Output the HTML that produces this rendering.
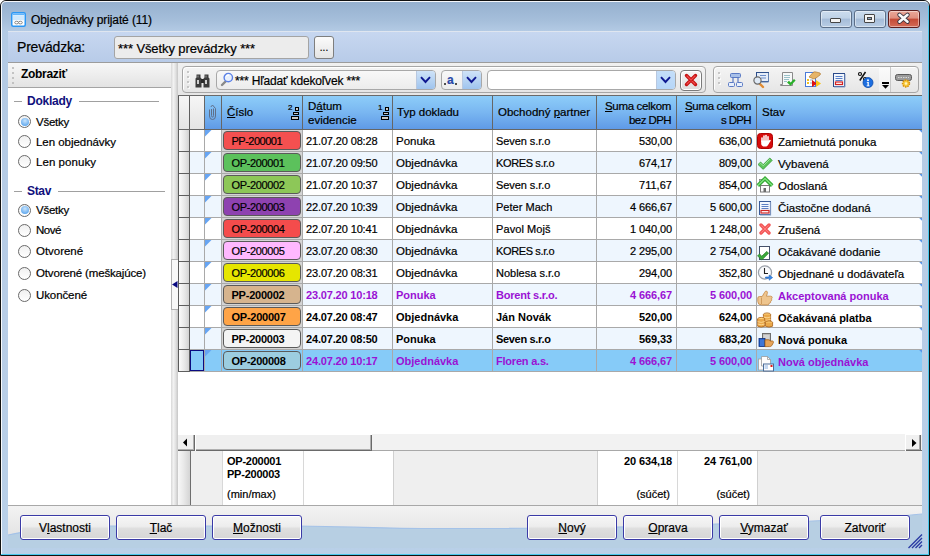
<!DOCTYPE html>
<html><head><meta charset="utf-8">
<style>
*{margin:0;padding:0;box-sizing:border-box}
html,body{width:930px;height:556px;overflow:hidden;background:#fff;font-family:"Liberation Sans",sans-serif;font-size:12px;color:#000}
.a{position:absolute}
.t{position:absolute;white-space:nowrap;-webkit-text-stroke:0.2px currentColor}
.u{text-decoration:underline}
svg{position:absolute;overflow:visible}
</style></head><body>

<div class="a" style="left:0;top:0;width:930px;height:556px;border:1px solid #111;border-radius:6px 6px 0 0;background:linear-gradient(#95b0cf 0px,#a6bfdb 20px,#b3cae4 30px,#b8cde6 300px,#b9d0e8 556px)"></div>
<div class="a" style="left:1px;top:1px;width:928px;height:554px;border:1px solid rgba(255,255,255,.9);border-bottom:none;border-right:none;border-radius:5px 5px 0 0"></div>
<div class="a" style="left:928px;top:6px;width:1px;height:549px;background:#48c8ec"></div>
<div class="a" style="left:1px;top:554px;width:928px;height:1px;background:#48c8ec"></div>
<svg style="left:11px;top:12px" width="15" height="15" viewBox="0 0 15 15"><rect x="0.75" y="0.75" width="13.5" height="13.5" rx="1.5" fill="#fff" stroke="#2b97f5" stroke-width="1.5"/><rect x="1.5" y="1.5" width="12" height="1.6" fill="#62b4fb"/><rect x="2" y="3.3" width="11" height="5" fill="#cfe8fd"/><ellipse cx="5.6" cy="10.6" rx="1.9" ry="1.3" fill="none" stroke="#8a8a8a" stroke-width="1"/><ellipse cx="9.4" cy="10.6" rx="1.9" ry="1.3" fill="none" stroke="#8a8a8a" stroke-width="1"/></svg>
<div class="t" style="left:31.00px;top:9.84px;line-height:20px;font-size:12px;color:#000;letter-spacing:-0.094px;">Objednávky prijaté (11)</div>
<div class="a" style="left:820px;top:10px;width:32px;height:18px;border:1px solid #5b6e88;border-radius:3px;background:linear-gradient(#cbdcee 0,#bfd2e7 45%,#a5bcd8 50%,#b9cde4 100%);box-shadow:inset 0 0 0 1px rgba(255,255,255,.45)"></div>
<div class="a" style="left:854px;top:10px;width:32px;height:18px;border:1px solid #5b6e88;border-radius:3px;background:linear-gradient(#cbdcee 0,#bfd2e7 45%,#a5bcd8 50%,#b9cde4 100%);box-shadow:inset 0 0 0 1px rgba(255,255,255,.45)"></div>
<div class="a" style="left:888px;top:10px;width:32px;height:18px;border:1px solid #5e1e1e;border-radius:3px;background:linear-gradient(#eba899 0,#e08e7e 45%,#c44a36 50%,#d46b57 100%);box-shadow:inset 0 0 0 1px rgba(255,255,255,.45)"></div>
<div class="a" style="left:830px;top:18px;width:11px;height:5px;background:#f4f4f4;border:1px solid #454545;border-radius:1px"></div>
<div class="a" style="left:864px;top:14px;width:11px;height:9px;background:#f4f4f4;border:1px solid #454545;border-radius:1px"></div>
<div class="a" style="left:867px;top:17px;width:5px;height:3px;background:#8ea6c4;border:1px solid #454545"></div>
<svg style="left:897px;top:13px" width="14" height="11" viewBox="0 0 14 11"><path d="M2.5 1.8 L10.5 8.7 M10.5 1.8 L2.5 8.7" stroke="#3a3440" stroke-width="4.4" stroke-linecap="round"/><path d="M2.5 1.8 L10.5 8.7 M10.5 1.8 L2.5 8.7" stroke="#fafafa" stroke-width="2.6" stroke-linecap="round"/></svg>
<div class="a" style="left:8px;top:31px;width:914px;height:1px;background:#dfe6f0"></div>
<div class="a" style="left:8px;top:32px;width:914px;height:30px;background:linear-gradient(#c7d7f0,#b8cbe8)"></div>
<div class="a" style="left:8px;top:62px;width:914px;height:1px;background:#9c9c9c"></div>
<div class="t" style="left:17.00px;top:37.15px;line-height:20px;font-size:14px;color:#000;letter-spacing:-0.203px;">Prevádzka:</div>
<div class="a" style="left:114px;top:36px;width:195px;height:23px;border:1px solid #a4a4a4;border-radius:3px;background:#ececec"></div>
<div class="t" style="left:118.00px;top:38.50px;line-height:20px;font-size:13px;color:#000;letter-spacing:-0.102px;">*** Všetky prevádzky ***</div>
<div class="a" style="left:314px;top:36px;width:20px;height:23px;border:1px solid #7e7e7e;border-radius:3px;background:linear-gradient(#fbfbfb,#e4e4e4)"></div>
<div class="t" style="left:319.83px;top:37.53px;line-height:20px;font-size:10px;color:#000;letter-spacing:0.000px;">...</div>
<div class="a" style="left:8px;top:63px;width:163px;height:24px;background:linear-gradient(#f7f7f7,#e3e3e3)"></div>
<div class="a" style="left:8px;top:87px;width:163px;height:1px;background:#a4a4a4"></div>
<div class="a" style="left:12px;top:67px;width:2px;height:2px;background:#b4b4b4;border-radius:1px"></div>
<div class="a" style="left:12px;top:72px;width:2px;height:2px;background:#b4b4b4;border-radius:1px"></div>
<div class="a" style="left:12px;top:77px;width:2px;height:2px;background:#b4b4b4;border-radius:1px"></div>
<div class="a" style="left:12px;top:82px;width:2px;height:2px;background:#b4b4b4;border-radius:1px"></div>
<div class="t" style="left:21.00px;top:64.34px;line-height:20px;font-size:12px;font-weight:bold;-webkit-text-stroke:0;color:#000;letter-spacing:-0.302px;">Zobraziť</div>
<div class="a" style="left:8px;top:88px;width:163px;height:417px;background:#fff"></div>
<div class="a" style="left:14px;top:101px;width:8px;height:1px;background:#a0a0a0"></div>
<div class="t" style="left:27.00px;top:90.84px;line-height:20px;font-size:12px;font-weight:bold;-webkit-text-stroke:0;color:#10107c;letter-spacing:-0.240px;">Doklady</div>
<div class="a" style="left:79px;top:101px;width:80px;height:1px;background:#a0a0a0"></div>
<div class="a" style="left:18.0px;top:115.0px;width:13px;height:13px;border-radius:50%;border:1px solid #6a6a6a;background:linear-gradient(#f0f0f0,#ffffff)"></div>
<div class="a" style="left:20.5px;top:117.5px;width:8px;height:8px;border-radius:50%;background:radial-gradient(circle at 50% 35%,#c9e4fc,#5da7ee 80%)"></div>
<div class="t" style="left:36.00px;top:111.52px;line-height:20px;font-size:11.5px;color:#000;letter-spacing:-0.252px;">Všetky</div>
<div class="a" style="left:18.0px;top:135.0px;width:13px;height:13px;border-radius:50%;border:1px solid #6a6a6a;background:linear-gradient(#f0f0f0,#ffffff)"></div>
<div class="t" style="left:36.00px;top:131.52px;line-height:20px;font-size:11.5px;color:#000;letter-spacing:-0.040px;">Len objednávky</div>
<div class="a" style="left:18.0px;top:155.0px;width:13px;height:13px;border-radius:50%;border:1px solid #6a6a6a;background:linear-gradient(#f0f0f0,#ffffff)"></div>
<div class="t" style="left:36.00px;top:151.52px;line-height:20px;font-size:11.5px;color:#000;letter-spacing:0.054px;">Len ponuky</div>
<div class="a" style="left:14px;top:191px;width:8px;height:1px;background:#a0a0a0"></div>
<div class="t" style="left:27.00px;top:180.84px;line-height:20px;font-size:12px;font-weight:bold;-webkit-text-stroke:0;color:#10107c;letter-spacing:-0.337px;">Stav</div>
<div class="a" style="left:58px;top:191px;width:107px;height:1px;background:#a0a0a0"></div>
<div class="a" style="left:18.0px;top:203.5px;width:13px;height:13px;border-radius:50%;border:1px solid #6a6a6a;background:linear-gradient(#f0f0f0,#ffffff)"></div>
<div class="a" style="left:20.5px;top:206px;width:8px;height:8px;border-radius:50%;background:radial-gradient(circle at 50% 35%,#c9e4fc,#5da7ee 80%)"></div>
<div class="t" style="left:36.00px;top:200.02px;line-height:20px;font-size:11.5px;color:#000;letter-spacing:-0.252px;">Všetky</div>
<div class="a" style="left:18.0px;top:223.5px;width:13px;height:13px;border-radius:50%;border:1px solid #6a6a6a;background:linear-gradient(#f0f0f0,#ffffff)"></div>
<div class="t" style="left:36.00px;top:220.02px;line-height:20px;font-size:11.5px;color:#000;letter-spacing:-0.461px;">Nové</div>
<div class="a" style="left:18.0px;top:244.5px;width:13px;height:13px;border-radius:50%;border:1px solid #6a6a6a;background:linear-gradient(#f0f0f0,#ffffff)"></div>
<div class="t" style="left:36.00px;top:241.02px;line-height:20px;font-size:11.5px;color:#000;letter-spacing:-0.038px;">Otvorené</div>
<div class="a" style="left:18.0px;top:266.5px;width:13px;height:13px;border-radius:50%;border:1px solid #6a6a6a;background:linear-gradient(#f0f0f0,#ffffff)"></div>
<div class="t" style="left:36.00px;top:263.02px;line-height:20px;font-size:11.5px;color:#000;letter-spacing:-0.156px;">Otvorené (meškajúce)</div>
<div class="a" style="left:18.0px;top:288.5px;width:13px;height:13px;border-radius:50%;border:1px solid #6a6a6a;background:linear-gradient(#f0f0f0,#ffffff)"></div>
<div class="t" style="left:36.00px;top:285.02px;line-height:20px;font-size:11.5px;color:#000;letter-spacing:-0.098px;">Ukončené</div>
<div class="a" style="left:171px;top:63px;width:7px;height:442px;background:linear-gradient(90deg,#d8d8d8,#f2f2f2 35%,#e2e2e2 65%,#c6c6c6)"></div>
<div class="a" style="left:171px;top:259px;width:7px;height:51px;background:#f8f8f8;border:1px solid #b0b0b0;border-right:none"></div>
<svg style="left:172px;top:280.5px" width="6" height="8"><path d="M0 3.5 L5.5 0 L5.5 7 Z" fill="#0a0a80"/></svg>
<div class="a" style="left:178px;top:63px;width:744px;height:32px;background:linear-gradient(#f0f0f0,#e6e6e6)"></div>
<div class="a" style="left:182px;top:66px;width:524px;height:27px;border:1px solid #a6a6a6;border-radius:4px;background:linear-gradient(#f4f4f4,#e6e6e6);box-shadow:inset 1px 1px 0 #fff"></div>
<div class="a" style="left:713px;top:66px;width:206px;height:27px;border:1px solid #a6a6a6;border-radius:4px;background:linear-gradient(#f4f4f4,#e6e6e6);box-shadow:inset 1px 1px 0 #fff"></div>
<div class="a" style="left:187px;top:71px;width:2px;height:2px;background:#b8b8b8;border-radius:1px;box-shadow:1px 1px 0 #fff"></div>
<div class="a" style="left:187px;top:76px;width:2px;height:2px;background:#b8b8b8;border-radius:1px;box-shadow:1px 1px 0 #fff"></div>
<div class="a" style="left:187px;top:81px;width:2px;height:2px;background:#b8b8b8;border-radius:1px;box-shadow:1px 1px 0 #fff"></div>
<div class="a" style="left:187px;top:86px;width:2px;height:2px;background:#b8b8b8;border-radius:1px;box-shadow:1px 1px 0 #fff"></div>
<div class="a" style="left:718px;top:72px;width:2px;height:2px;background:#b8b8b8;border-radius:1px;box-shadow:1px 1px 0 #fff"></div>
<div class="a" style="left:718px;top:77px;width:2px;height:2px;background:#b8b8b8;border-radius:1px;box-shadow:1px 1px 0 #fff"></div>
<div class="a" style="left:718px;top:82px;width:2px;height:2px;background:#b8b8b8;border-radius:1px;box-shadow:1px 1px 0 #fff"></div>
<svg style="left:195px;top:74px" width="16" height="14" viewBox="0 0 16 14"><path d="M1.5 0.5 H5.5 V3.5 L6.5 4.5 V13.5 H0.5 V4.5 L1.5 3.5Z" fill="#3c3c3c"/>
<path d="M9.5 0.5 H13.5 V3.5 L14.5 4.5 V13.5 H8.5 V4.5 L9.5 3.5Z" fill="#3c3c3c"/>
<rect x="6" y="5" width="3" height="4" fill="#2a2a2a"/>
<rect x="2" y="6" width="2" height="4" fill="#d0d0d0"/><rect x="10" y="6" width="2" height="4" fill="#d0d0d0"/>
<rect x="2.5" y="1.5" width="1" height="2" fill="#9a9a9a"/><rect x="10.5" y="1.5" width="1" height="2" fill="#9a9a9a"/></svg>
<div class="a" style="left:216px;top:70px;width:220px;height:20px;border:1px solid #a8a8a8;border-radius:4px;background:linear-gradient(#f8f8f8,#ececec)"></div>
<div class="a" style="left:416px;top:71px;width:19px;height:18px;background:linear-gradient(#cfe3f8,#9fc4ee);border-left:1px solid #b8c8e0;border-radius:0 3px 3px 0"></div>
<svg style="left:220px;top:72px" width="14" height="15" viewBox="0 0 14 15"><path d="M2 13 L5.5 9.5" stroke="#8a8a8a" stroke-width="2.4" stroke-linecap="round"/>
<circle cx="8.3" cy="5.6" r="4.2" fill="#e8f0fc" stroke="#5b80e6" stroke-width="1.4"/>
<path d="M6 4.5 Q7 3 9 3.2" stroke="#fff" stroke-width="1.2" fill="none"/></svg>
<svg style="left:420px;top:76px" width="11" height="8" viewBox="0 0 11 8"><path d="M1 1.2 L5.5 6 L10 1.2" stroke="#0e1890" stroke-width="1.9" fill="none"/></svg>
<div class="a" style="left:441px;top:70px;width:41px;height:20px;border:1px solid #a8a8a8;border-radius:4px;background:linear-gradient(#f8f8f8,#ececec)"></div>
<div class="a" style="left:462px;top:71px;width:19px;height:18px;background:linear-gradient(#cfe3f8,#9fc4ee);border-left:1px solid #b8c8e0;border-radius:0 3px 3px 0"></div>
<svg style="left:466px;top:76px" width="11" height="8" viewBox="0 0 11 8"><path d="M1 1.2 L5.5 6 L10 1.2" stroke="#0e1890" stroke-width="1.9" fill="none"/></svg>
<div class="a" style="left:444px;top:83px;width:2px;height:2px;background:#505050"></div>
<div class="a" style="left:455px;top:83px;width:2px;height:2px;background:#505050"></div>
<div class="t" style="left:447px;top:71px;line-height:18px;font-size:12px;font-weight:bold;color:#2848a8">a</div>
<div class="a" style="left:487px;top:70px;width:189px;height:20px;border:1px solid #a8a8a8;border-radius:4px;background:#fff"></div>
<div class="a" style="left:656px;top:71px;width:19px;height:18px;background:linear-gradient(#c4def9,#b6d6f8);border-left:1px solid #b8c8e0;border-radius:0 3px 3px 0"></div>
<svg style="left:660px;top:76px" width="11" height="8" viewBox="0 0 11 8"><path d="M1 1.2 L5.5 6 L10 1.2" stroke="#0e1890" stroke-width="1.9" fill="none"/></svg>
<div class="a" style="left:680px;top:70px;width:22px;height:21px;border:1px solid #7a7a7a;border-radius:4px;background:linear-gradient(#f6f6f6,#dcdcdc);box-shadow:inset 0 0 0 1px #fff"></div>
<svg style="left:684px;top:73px" width="14" height="14" viewBox="0 0 14 14"><path d="M2.5 2.5 L11.5 11.5 M11.5 2.5 L2.5 11.5" stroke="#c41010" stroke-width="3.4" stroke-linecap="round"/>
<path d="M3 3 L11 11 M11 3 L3 11" stroke="#f04a4a" stroke-width="1.2" stroke-linecap="round"/></svg>
<svg style="left:727px;top:72px" width="17" height="16" viewBox="0 0 17 16"><rect x="3.5" y="1.5" width="10" height="4" rx="1" fill="#a8c0e8" stroke="#5a7ac4"/>
<path d="M6 5.5 V10 M11 5.5 V10" stroke="#5a7ac4" stroke-width="1.2"/>
<rect x="1.5" y="10.5" width="6" height="4" rx="1" fill="#e8f0fc" stroke="#5a7ac4"/>
<rect x="9.5" y="10.5" width="6" height="4" rx="1" fill="#e8f0fc" stroke="#5a7ac4"/></svg>
<svg style="left:753px;top:71px" width="17" height="17" viewBox="0 0 17 17"><rect x="3.5" y="1.5" width="12" height="9" fill="#e4ecf8" stroke="#2d4f8a"/>
<path d="M15.5 2 V11 H5" stroke="#5f7fb0" fill="none"/>
<path d="M7 4.5 H13 M8 7 H13" stroke="#6a8cc8"/>
<path d="M6 12 L10 16" stroke="#e08a30" stroke-width="2.4" stroke-linecap="round"/>
<circle cx="4.5" cy="9.5" r="3.6" fill="#dfeaf6" stroke="#6a6a6a" stroke-width="1.2"/></svg>
<svg style="left:779px;top:71px" width="17" height="17" viewBox="0 0 17 17"><path d="M3.5 1.5 H13.5 V14.5 H1.5 V13.5 H3.5Z" fill="#f6f8f8" stroke="#8a8a8a"/>
<path d="M5 4.5 H11 M5 6.5 H11 M5 8.5 H10 M5 10.5 H8" stroke="#9ac0c8" stroke-width="1"/>
<path d="M8 11.5 L10 9.8 L11.6 11.4 L15 8 L16.6 9.6 L11.6 14.8Z" fill="#2ab02a"/></svg>
<svg style="left:804px;top:71px" width="18" height="17" viewBox="0 0 18 17"><rect x="1.5" y="1.5" width="10" height="14" fill="#fff" stroke="#4a7ad8"/>
<rect x="3" y="8" width="2" height="2" fill="#f0c020"/><rect x="3" y="11" width="2" height="2" fill="#f0c020"/>
<path d="M6 9 H9 M6 12 H9" stroke="#9ab"/>
<path d="M5 6 L9 1.5 Q10 0.5 12 1 L16 2 Q17 3 16 4 L12 7 L10 8Z" fill="#e6b468" stroke="#b07a30" stroke-width="0.7"/>
<path d="M8 9 L13 12.5 L8 16Z" fill="#e01010"/>
<path d="M12 9 L17 12.5 L12 16Z" fill="#f8c418"/></svg>
<svg style="left:832px;top:72px" width="15" height="16" viewBox="0 0 15 16"><rect x="1.5" y="1.5" width="11" height="13" fill="#f2f6fc" stroke="#2a4a8a"/>
<path d="M13 2 V15 H2" stroke="#8aa0c8" fill="none"/>
<path d="M3.5 4.5 H10.5 M3.5 6.5 H10.5 M3.5 8.5 H10.5" stroke="#5a80c8"/>
<rect x="3.5" y="10" width="7" height="2.5" fill="#fff" stroke="#d42020" stroke-width="1.2"/></svg>
<svg style="left:857px;top:71px" width="18" height="18" viewBox="0 0 18 18"><circle cx="3" cy="3" r="1.5" fill="none" stroke="#111" stroke-width="1.2"/>
<path d="M8.5 1 L2.8 9.5" stroke="#111" stroke-width="1.5"/>
<circle cx="8" cy="8" r="1.5" fill="none" stroke="#111" stroke-width="1.2"/>
<circle cx="11" cy="11.6" r="5" fill="#1c6ee0" stroke="#0c4aa8" stroke-width="0.8"/>
<circle cx="11" cy="9.2" r="1" fill="#fff"/>
<path d="M9.8 10.9 H11.8 V14.4 H12.6 V15.2 H9.6 V14.4 H10.5 V11.7 H9.8Z" fill="#fff"/></svg>
<div class="a" style="left:879px;top:67px;width:12px;height:25px;background:linear-gradient(#fbfbfb,#f0f0f0)"></div>
<div class="a" style="left:890px;top:67px;width:1px;height:25px;background:#c8c8c8"></div>
<div class="a" style="left:882px;top:82px;width:7px;height:1.5px;background:#000"></div>
<svg style="left:882px;top:85px" width="7" height="4" viewBox="0 0 7 4"><path d="M0 0 H7 L3.5 3.8Z" fill="#000"/></svg>
<svg style="left:895px;top:73px" width="18" height="16" viewBox="0 0 18 16"><rect x="0.5" y="1.5" width="16" height="6" rx="2" fill="#9a9a9a" stroke="#5a5a5a"/>
<path d="M3 4.5 H14" stroke="#d8d8d8" stroke-dasharray="1.5 1"/>
<circle cx="11" cy="10.5" r="3.4" fill="#f8c838" stroke="#d89010" stroke-width="1.6" stroke-dasharray="1.4 1"/>
<circle cx="11" cy="10.5" r="1.3" fill="#fff4c0"/></svg>
<div class="t" style="left:235.00px;top:70.84px;line-height:20px;font-size:12px;color:#000;letter-spacing:-0.163px;">*** Hľadať kdekoľvek ***</div>
<div class="a" style="left:178px;top:95px;width:744px;height:410px;background:#fff"></div>
<div class="a" style="left:178px;top:95px;width:1px;height:277px;background:#5a5a5a"></div>
<div class="a" style="left:178px;top:95px;width:744px;height:1px;background:#6a6a6a"></div>
<div class="a" style="left:179px;top:96px;width:25px;height:33px;background:linear-gradient(#f6f6f6,#e4e4e4)"></div>
<div class="a" style="left:204px;top:96px;width:718px;height:33px;background:linear-gradient(#8dcdf9,#79b6f1 50%,#5f9ae7)"></div>
<div class="a" style="left:179px;top:129px;width:743px;height:1px;background:#666"></div>
<div class="a" style="left:189px;top:96px;width:1px;height:33px;background:#5e5e5e"></div>
<div class="a" style="left:204px;top:96px;width:1px;height:33px;background:#666"></div>
<div class="a" style="left:221px;top:96px;width:1px;height:33px;background:#666"></div>
<div class="a" style="left:302px;top:96px;width:1px;height:33px;background:#666"></div>
<div class="a" style="left:392px;top:96px;width:1px;height:33px;background:#666"></div>
<div class="a" style="left:492px;top:96px;width:1px;height:33px;background:#666"></div>
<div class="a" style="left:596px;top:96px;width:1px;height:33px;background:#666"></div>
<div class="a" style="left:676px;top:96px;width:1px;height:33px;background:#666"></div>
<div class="a" style="left:756px;top:96px;width:1px;height:33px;background:#666"></div>
<div class="a" style="left:179px;top:130px;width:10px;height:21px;background:linear-gradient(90deg,#fbfbfb,#e6e6e6 60%,#d2d2d2)"></div>
<div class="a" style="left:190px;top:130px;width:732px;height:21px;background:#fff"></div>
<div class="a" style="left:179px;top:151px;width:743px;height:1px;background:#a9a9a9"></div>
<div class="a" style="left:179px;top:151px;width:11px;height:1px;background:#5e5e5e"></div>
<div class="a" style="left:189px;top:130px;width:1px;height:21px;background:#5e5e5e"></div>
<div class="a" style="left:204px;top:130px;width:1px;height:21px;background:#a9a9a9"></div>
<div class="a" style="left:221px;top:130px;width:1px;height:21px;background:#a9a9a9"></div>
<div class="a" style="left:302px;top:130px;width:1px;height:21px;background:#a9a9a9"></div>
<div class="a" style="left:392px;top:130px;width:1px;height:21px;background:#a9a9a9"></div>
<div class="a" style="left:492px;top:130px;width:1px;height:21px;background:#a9a9a9"></div>
<div class="a" style="left:596px;top:130px;width:1px;height:21px;background:#a9a9a9"></div>
<div class="a" style="left:676px;top:130px;width:1px;height:21px;background:#a9a9a9"></div>
<div class="a" style="left:756px;top:130px;width:1px;height:21px;background:#a9a9a9"></div>
<svg style="left:919px;top:130px" width="3" height="3"><path d="M0.2 0 H3 V2.8Z" fill="#5a96ea"/></svg>
<svg style="left:205px;top:130px" width="7" height="7"><path d="M0 0 H6.5 L0 6.5Z" fill="#67a5f3"/></svg>
<div class="a" style="left:222px;top:130px;width:80px;height:21px;background:#d4d4d4"></div>
<div class="a" style="left:223px;top:131px;width:78px;height:19px;background:#f45050;border:1px solid #5a5a5a;border-radius:4px"></div>
<div class="t" style="left:231.50px;top:131.19px;line-height:20px;font-size:11px;color:#000;letter-spacing:-0.505px;">PP-200001</div>
<div class="t" style="left:306.00px;top:131.19px;line-height:20px;font-size:11px;color:#000;letter-spacing:-0.135px;">21.07.20 08:28</div>
<div class="t" style="left:396.00px;top:131.02px;line-height:20px;font-size:11.5px;color:#000;letter-spacing:0.000px;">Ponuka</div>
<div class="t" style="left:496.00px;top:131.19px;line-height:20px;font-size:11px;color:#000;letter-spacing:-0.076px;">Seven s.r.o</div>
<div class="t" style="left:639.00px;top:131.19px;line-height:20px;font-size:11px;color:#000;letter-spacing:-0.107px;">530,00</div>
<div class="t" style="left:719.00px;top:131.19px;line-height:20px;font-size:11px;color:#000;letter-spacing:-0.107px;">636,00</div>
<div class="t" style="left:778.00px;top:132.02px;line-height:20px;font-size:11.5px;color:#000;letter-spacing:0.000px;">Zamietnutá ponuka</div>
<svg style="left:757px;top:132px" width="16" height="17" viewBox="0 0 16 17"><rect x="0.5" y="1.5" width="15" height="15" rx="3" fill="#d60c0c" stroke="#b00000"/>
<g stroke="#fff" stroke-linecap="round" fill="none"><path d="M5 9.5 V6" stroke-width="1.5"/><path d="M7 9 V4" stroke-width="1.5"/><path d="M9 9 V3.6" stroke-width="1.5"/><path d="M11 9.5 V4.8" stroke-width="1.5"/><path d="M11.2 11 L13 8.6" stroke-width="1.6"/></g>
<path d="M4.2 8.5 H11.8 V11.5 Q11 14.6 8 14.6 Q4.2 14.6 4.2 11.5Z" fill="#fff"/></svg>
<div class="a" style="left:179px;top:152px;width:10px;height:21px;background:linear-gradient(90deg,#fbfbfb,#e6e6e6 60%,#d2d2d2)"></div>
<div class="a" style="left:190px;top:152px;width:732px;height:21px;background:#eef6fe"></div>
<div class="a" style="left:179px;top:173px;width:743px;height:1px;background:#a9a9a9"></div>
<div class="a" style="left:179px;top:173px;width:11px;height:1px;background:#5e5e5e"></div>
<div class="a" style="left:189px;top:152px;width:1px;height:21px;background:#5e5e5e"></div>
<div class="a" style="left:204px;top:152px;width:1px;height:21px;background:#a9a9a9"></div>
<div class="a" style="left:221px;top:152px;width:1px;height:21px;background:#a9a9a9"></div>
<div class="a" style="left:302px;top:152px;width:1px;height:21px;background:#a9a9a9"></div>
<div class="a" style="left:392px;top:152px;width:1px;height:21px;background:#a9a9a9"></div>
<div class="a" style="left:492px;top:152px;width:1px;height:21px;background:#a9a9a9"></div>
<div class="a" style="left:596px;top:152px;width:1px;height:21px;background:#a9a9a9"></div>
<div class="a" style="left:676px;top:152px;width:1px;height:21px;background:#a9a9a9"></div>
<div class="a" style="left:756px;top:152px;width:1px;height:21px;background:#a9a9a9"></div>
<svg style="left:919px;top:152px" width="3" height="3"><path d="M0.2 0 H3 V2.8Z" fill="#5a96ea"/></svg>
<svg style="left:205px;top:152px" width="7" height="7"><path d="M0 0 H6.5 L0 6.5Z" fill="#67a5f3"/></svg>
<div class="a" style="left:222px;top:152px;width:80px;height:21px;background:#d4d4d4"></div>
<div class="a" style="left:223px;top:153px;width:78px;height:19px;background:#5cc15c;border:1px solid #5a5a5a;border-radius:4px"></div>
<div class="t" style="left:231.50px;top:153.19px;line-height:20px;font-size:11px;color:#000;letter-spacing:-0.362px;">OP-200001</div>
<div class="t" style="left:306.00px;top:153.19px;line-height:20px;font-size:11px;color:#000;letter-spacing:-0.135px;">21.07.20 09:50</div>
<div class="t" style="left:396.00px;top:153.02px;line-height:20px;font-size:11.5px;color:#000;letter-spacing:0.000px;">Objednávka</div>
<div class="t" style="left:496.00px;top:153.19px;line-height:20px;font-size:11px;color:#000;letter-spacing:-0.369px;">KORES s.r.o</div>
<div class="t" style="left:639.00px;top:153.19px;line-height:20px;font-size:11px;color:#000;letter-spacing:-0.107px;">674,17</div>
<div class="t" style="left:719.00px;top:153.19px;line-height:20px;font-size:11px;color:#000;letter-spacing:-0.107px;">809,00</div>
<div class="t" style="left:778.00px;top:154.02px;line-height:20px;font-size:11.5px;color:#000;letter-spacing:0.000px;">Vybavená</div>
<svg style="left:757px;top:154px" width="16" height="16" viewBox="0 0 16 16"><path d="M1 10.5 L3.6 8 L6.2 10.6 L12.8 4 L15.2 6.4 L6.2 15.4 Z" fill="#5cc45c" stroke="#3a9a3a" stroke-width="0.8"/>
<path d="M2.4 10.4 L3.6 9.2 L6.2 11.8 L12.8 5.2" stroke="#9be59b" stroke-width="1" fill="none"/></svg>
<div class="a" style="left:179px;top:174px;width:10px;height:21px;background:linear-gradient(90deg,#fbfbfb,#e6e6e6 60%,#d2d2d2)"></div>
<div class="a" style="left:190px;top:174px;width:732px;height:21px;background:#fff"></div>
<div class="a" style="left:179px;top:195px;width:743px;height:1px;background:#a9a9a9"></div>
<div class="a" style="left:179px;top:195px;width:11px;height:1px;background:#5e5e5e"></div>
<div class="a" style="left:189px;top:174px;width:1px;height:21px;background:#5e5e5e"></div>
<div class="a" style="left:204px;top:174px;width:1px;height:21px;background:#a9a9a9"></div>
<div class="a" style="left:221px;top:174px;width:1px;height:21px;background:#a9a9a9"></div>
<div class="a" style="left:302px;top:174px;width:1px;height:21px;background:#a9a9a9"></div>
<div class="a" style="left:392px;top:174px;width:1px;height:21px;background:#a9a9a9"></div>
<div class="a" style="left:492px;top:174px;width:1px;height:21px;background:#a9a9a9"></div>
<div class="a" style="left:596px;top:174px;width:1px;height:21px;background:#a9a9a9"></div>
<div class="a" style="left:676px;top:174px;width:1px;height:21px;background:#a9a9a9"></div>
<div class="a" style="left:756px;top:174px;width:1px;height:21px;background:#a9a9a9"></div>
<svg style="left:919px;top:174px" width="3" height="3"><path d="M0.2 0 H3 V2.8Z" fill="#5a96ea"/></svg>
<svg style="left:205px;top:174px" width="7" height="7"><path d="M0 0 H6.5 L0 6.5Z" fill="#67a5f3"/></svg>
<div class="a" style="left:222px;top:174px;width:80px;height:21px;background:#d4d4d4"></div>
<div class="a" style="left:223px;top:175px;width:78px;height:19px;background:#8dc758;border:1px solid #5a5a5a;border-radius:4px"></div>
<div class="t" style="left:231.50px;top:175.19px;line-height:20px;font-size:11px;color:#000;letter-spacing:-0.362px;">OP-200002</div>
<div class="t" style="left:306.00px;top:175.19px;line-height:20px;font-size:11px;color:#000;letter-spacing:-0.135px;">21.07.20 10:37</div>
<div class="t" style="left:396.00px;top:175.02px;line-height:20px;font-size:11.5px;color:#000;letter-spacing:0.000px;">Objednávka</div>
<div class="t" style="left:496.00px;top:175.19px;line-height:20px;font-size:11px;color:#000;letter-spacing:-0.076px;">Seven s.r.o</div>
<div class="t" style="left:639.00px;top:175.19px;line-height:20px;font-size:11px;color:#000;letter-spacing:0.029px;">711,67</div>
<div class="t" style="left:719.00px;top:175.19px;line-height:20px;font-size:11px;color:#000;letter-spacing:-0.107px;">854,00</div>
<div class="t" style="left:778.00px;top:176.02px;line-height:20px;font-size:11.5px;color:#000;letter-spacing:0.000px;">Odoslaná</div>
<svg style="left:757px;top:177px" width="16" height="17" viewBox="0 0 16 17"><rect x="3.5" y="8.5" width="9" height="6.5" fill="#fafafa" stroke="#7a7a7a"/>
<rect x="6.5" y="11" width="2.5" height="4" fill="#6a6a6a"/>
<rect x="2.5" y="2.5" width="2" height="4" fill="#f0f0f0" stroke="#808080" stroke-width="0.8"/>
<path d="M0.8 8.6 L8 1.6 L15.2 8.6" stroke="#2fa62f" stroke-width="3.6" fill="none" stroke-linejoin="miter"/>
<path d="M0.8 8.6 L8 1.6 L15.2 8.6" stroke="#7fe27f" stroke-width="1.4" fill="none"/></svg>
<div class="a" style="left:179px;top:196px;width:10px;height:21px;background:linear-gradient(90deg,#fbfbfb,#e6e6e6 60%,#d2d2d2)"></div>
<div class="a" style="left:190px;top:196px;width:732px;height:21px;background:#eef6fe"></div>
<div class="a" style="left:179px;top:217px;width:743px;height:1px;background:#a9a9a9"></div>
<div class="a" style="left:179px;top:217px;width:11px;height:1px;background:#5e5e5e"></div>
<div class="a" style="left:189px;top:196px;width:1px;height:21px;background:#5e5e5e"></div>
<div class="a" style="left:204px;top:196px;width:1px;height:21px;background:#a9a9a9"></div>
<div class="a" style="left:221px;top:196px;width:1px;height:21px;background:#a9a9a9"></div>
<div class="a" style="left:302px;top:196px;width:1px;height:21px;background:#a9a9a9"></div>
<div class="a" style="left:392px;top:196px;width:1px;height:21px;background:#a9a9a9"></div>
<div class="a" style="left:492px;top:196px;width:1px;height:21px;background:#a9a9a9"></div>
<div class="a" style="left:596px;top:196px;width:1px;height:21px;background:#a9a9a9"></div>
<div class="a" style="left:676px;top:196px;width:1px;height:21px;background:#a9a9a9"></div>
<div class="a" style="left:756px;top:196px;width:1px;height:21px;background:#a9a9a9"></div>
<svg style="left:919px;top:196px" width="3" height="3"><path d="M0.2 0 H3 V2.8Z" fill="#5a96ea"/></svg>
<svg style="left:205px;top:196px" width="7" height="7"><path d="M0 0 H6.5 L0 6.5Z" fill="#67a5f3"/></svg>
<div class="a" style="left:222px;top:196px;width:80px;height:21px;background:#d4d4d4"></div>
<div class="a" style="left:223px;top:197px;width:78px;height:19px;background:#8e42b0;border:1px solid #5a5a5a;border-radius:4px"></div>
<div class="t" style="left:231.50px;top:197.19px;line-height:20px;font-size:11px;color:#000;letter-spacing:-0.362px;">OP-200003</div>
<div class="t" style="left:306.00px;top:197.19px;line-height:20px;font-size:11px;color:#000;letter-spacing:-0.135px;">22.07.20 10:39</div>
<div class="t" style="left:396.00px;top:197.02px;line-height:20px;font-size:11.5px;color:#000;letter-spacing:0.000px;">Objednávka</div>
<div class="t" style="left:496.00px;top:197.19px;line-height:20px;font-size:11px;color:#000;letter-spacing:0.026px;">Peter Mach</div>
<div class="t" style="left:630.00px;top:197.19px;line-height:20px;font-size:11px;color:#000;letter-spacing:-0.102px;">4 666,67</div>
<div class="t" style="left:710.00px;top:197.19px;line-height:20px;font-size:11px;color:#000;letter-spacing:-0.102px;">5 600,00</div>
<div class="t" style="left:778.00px;top:198.02px;line-height:20px;font-size:11.5px;color:#000;letter-spacing:0.000px;">Čiastočne dodaná</div>
<svg style="left:757px;top:201px" width="16" height="16" viewBox="0 0 16 16"><rect x="2.5" y="0.5" width="11" height="13" fill="#f4f8ff" stroke="#3a5a98"/>
<path d="M13.5 1 V14 H3" stroke="#7b93bd" stroke-width="1.2" fill="none"/>
<path d="M4.5 3.5 H11.5 M4.5 5.5 H11.5 M4.5 7.5 H11.5" stroke="#5d7fc4" stroke-width="1"/>
<rect x="4" y="9.5" width="8" height="2.5" fill="#fff" stroke="#d02424" stroke-width="1.2"/></svg>
<div class="a" style="left:179px;top:218px;width:10px;height:21px;background:linear-gradient(90deg,#fbfbfb,#e6e6e6 60%,#d2d2d2)"></div>
<div class="a" style="left:190px;top:218px;width:732px;height:21px;background:#fff"></div>
<div class="a" style="left:179px;top:239px;width:743px;height:1px;background:#a9a9a9"></div>
<div class="a" style="left:179px;top:239px;width:11px;height:1px;background:#5e5e5e"></div>
<div class="a" style="left:189px;top:218px;width:1px;height:21px;background:#5e5e5e"></div>
<div class="a" style="left:204px;top:218px;width:1px;height:21px;background:#a9a9a9"></div>
<div class="a" style="left:221px;top:218px;width:1px;height:21px;background:#a9a9a9"></div>
<div class="a" style="left:302px;top:218px;width:1px;height:21px;background:#a9a9a9"></div>
<div class="a" style="left:392px;top:218px;width:1px;height:21px;background:#a9a9a9"></div>
<div class="a" style="left:492px;top:218px;width:1px;height:21px;background:#a9a9a9"></div>
<div class="a" style="left:596px;top:218px;width:1px;height:21px;background:#a9a9a9"></div>
<div class="a" style="left:676px;top:218px;width:1px;height:21px;background:#a9a9a9"></div>
<div class="a" style="left:756px;top:218px;width:1px;height:21px;background:#a9a9a9"></div>
<svg style="left:919px;top:218px" width="3" height="3"><path d="M0.2 0 H3 V2.8Z" fill="#5a96ea"/></svg>
<svg style="left:205px;top:218px" width="7" height="7"><path d="M0 0 H6.5 L0 6.5Z" fill="#67a5f3"/></svg>
<div class="a" style="left:222px;top:218px;width:80px;height:21px;background:#d4d4d4"></div>
<div class="a" style="left:223px;top:219px;width:78px;height:19px;background:#f44c4c;border:1px solid #5a5a5a;border-radius:4px"></div>
<div class="t" style="left:231.50px;top:219.19px;line-height:20px;font-size:11px;color:#000;letter-spacing:-0.362px;">OP-200004</div>
<div class="t" style="left:306.00px;top:219.19px;line-height:20px;font-size:11px;color:#000;letter-spacing:-0.135px;">22.07.20 10:41</div>
<div class="t" style="left:396.00px;top:219.02px;line-height:20px;font-size:11.5px;color:#000;letter-spacing:0.000px;">Objednávka</div>
<div class="t" style="left:496.00px;top:219.19px;line-height:20px;font-size:11px;color:#000;letter-spacing:0.090px;">Pavol Mojš</div>
<div class="t" style="left:630.00px;top:219.19px;line-height:20px;font-size:11px;color:#000;letter-spacing:-0.102px;">1 040,00</div>
<div class="t" style="left:710.00px;top:219.19px;line-height:20px;font-size:11px;color:#000;letter-spacing:-0.102px;">1 248,00</div>
<div class="t" style="left:778.00px;top:220.02px;line-height:20px;font-size:11.5px;color:#000;letter-spacing:0.000px;">Zrušená</div>
<svg style="left:757px;top:221px" width="16" height="16" viewBox="0 0 16 16"><path d="M4 4 L12 12 M12 4 L4 12" stroke="#f25858" stroke-width="3.4" stroke-linecap="round"/>
<path d="M4.5 4.5 L11.5 11.5 M11.5 4.5 L4.5 11.5" stroke="#ff8080" stroke-width="0.9" stroke-linecap="round"/></svg>
<div class="a" style="left:179px;top:240px;width:10px;height:21px;background:linear-gradient(90deg,#fbfbfb,#e6e6e6 60%,#d2d2d2)"></div>
<div class="a" style="left:190px;top:240px;width:732px;height:21px;background:#eef6fe"></div>
<div class="a" style="left:179px;top:261px;width:743px;height:1px;background:#a9a9a9"></div>
<div class="a" style="left:179px;top:261px;width:11px;height:1px;background:#5e5e5e"></div>
<div class="a" style="left:189px;top:240px;width:1px;height:21px;background:#5e5e5e"></div>
<div class="a" style="left:204px;top:240px;width:1px;height:21px;background:#a9a9a9"></div>
<div class="a" style="left:221px;top:240px;width:1px;height:21px;background:#a9a9a9"></div>
<div class="a" style="left:302px;top:240px;width:1px;height:21px;background:#a9a9a9"></div>
<div class="a" style="left:392px;top:240px;width:1px;height:21px;background:#a9a9a9"></div>
<div class="a" style="left:492px;top:240px;width:1px;height:21px;background:#a9a9a9"></div>
<div class="a" style="left:596px;top:240px;width:1px;height:21px;background:#a9a9a9"></div>
<div class="a" style="left:676px;top:240px;width:1px;height:21px;background:#a9a9a9"></div>
<div class="a" style="left:756px;top:240px;width:1px;height:21px;background:#a9a9a9"></div>
<svg style="left:919px;top:240px" width="3" height="3"><path d="M0.2 0 H3 V2.8Z" fill="#5a96ea"/></svg>
<svg style="left:205px;top:240px" width="7" height="7"><path d="M0 0 H6.5 L0 6.5Z" fill="#67a5f3"/></svg>
<div class="a" style="left:222px;top:240px;width:80px;height:21px;background:#d4d4d4"></div>
<div class="a" style="left:223px;top:241px;width:78px;height:19px;background:#ffb8ff;border:1px solid #5a5a5a;border-radius:4px"></div>
<div class="t" style="left:231.50px;top:241.19px;line-height:20px;font-size:11px;color:#000;letter-spacing:-0.362px;">OP-200005</div>
<div class="t" style="left:306.00px;top:241.19px;line-height:20px;font-size:11px;color:#000;letter-spacing:-0.135px;">23.07.20 08:30</div>
<div class="t" style="left:396.00px;top:241.02px;line-height:20px;font-size:11.5px;color:#000;letter-spacing:0.000px;">Objednávka</div>
<div class="t" style="left:496.00px;top:241.19px;line-height:20px;font-size:11px;color:#000;letter-spacing:-0.369px;">KORES s.r.o</div>
<div class="t" style="left:630.00px;top:241.19px;line-height:20px;font-size:11px;color:#000;letter-spacing:-0.102px;">2 295,00</div>
<div class="t" style="left:710.00px;top:241.19px;line-height:20px;font-size:11px;color:#000;letter-spacing:-0.102px;">2 754,00</div>
<div class="t" style="left:778.00px;top:242.02px;line-height:20px;font-size:11.5px;color:#000;letter-spacing:0.000px;">Očakávané dodanie</div>
<svg style="left:757px;top:246px" width="16" height="16" viewBox="0 0 16 16"><rect x="2.5" y="0.5" width="10" height="13" fill="#fff" stroke="#44506a"/>
<path d="M0.5 9.8 L2.6 8 L4.8 10.2 L9.8 5.4 L11.6 7.2 L4.8 14 Z" fill="#3aa83a" stroke="#227a22" stroke-width="0.7"/></svg>
<div class="a" style="left:179px;top:262px;width:10px;height:21px;background:linear-gradient(90deg,#fbfbfb,#e6e6e6 60%,#d2d2d2)"></div>
<div class="a" style="left:190px;top:262px;width:732px;height:21px;background:#fff"></div>
<div class="a" style="left:179px;top:283px;width:743px;height:1px;background:#a9a9a9"></div>
<div class="a" style="left:179px;top:283px;width:11px;height:1px;background:#5e5e5e"></div>
<div class="a" style="left:189px;top:262px;width:1px;height:21px;background:#5e5e5e"></div>
<div class="a" style="left:204px;top:262px;width:1px;height:21px;background:#a9a9a9"></div>
<div class="a" style="left:221px;top:262px;width:1px;height:21px;background:#a9a9a9"></div>
<div class="a" style="left:302px;top:262px;width:1px;height:21px;background:#a9a9a9"></div>
<div class="a" style="left:392px;top:262px;width:1px;height:21px;background:#a9a9a9"></div>
<div class="a" style="left:492px;top:262px;width:1px;height:21px;background:#a9a9a9"></div>
<div class="a" style="left:596px;top:262px;width:1px;height:21px;background:#a9a9a9"></div>
<div class="a" style="left:676px;top:262px;width:1px;height:21px;background:#a9a9a9"></div>
<div class="a" style="left:756px;top:262px;width:1px;height:21px;background:#a9a9a9"></div>
<svg style="left:919px;top:262px" width="3" height="3"><path d="M0.2 0 H3 V2.8Z" fill="#5a96ea"/></svg>
<svg style="left:205px;top:262px" width="7" height="7"><path d="M0 0 H6.5 L0 6.5Z" fill="#67a5f3"/></svg>
<div class="a" style="left:222px;top:262px;width:80px;height:21px;background:#d4d4d4"></div>
<div class="a" style="left:223px;top:263px;width:78px;height:19px;background:#e6e600;border:1px solid #5a5a5a;border-radius:4px"></div>
<div class="t" style="left:231.50px;top:263.19px;line-height:20px;font-size:11px;color:#000;letter-spacing:-0.362px;">OP-200006</div>
<div class="t" style="left:306.00px;top:263.19px;line-height:20px;font-size:11px;color:#000;letter-spacing:-0.135px;">23.07.20 08:31</div>
<div class="t" style="left:396.00px;top:263.02px;line-height:20px;font-size:11.5px;color:#000;letter-spacing:0.000px;">Objednávka</div>
<div class="t" style="left:496.00px;top:263.19px;line-height:20px;font-size:11px;color:#000;letter-spacing:0.000px;">Noblesa s.r.o</div>
<div class="t" style="left:639.00px;top:263.19px;line-height:20px;font-size:11px;color:#000;letter-spacing:-0.107px;">294,00</div>
<div class="t" style="left:719.00px;top:263.19px;line-height:20px;font-size:11px;color:#000;letter-spacing:-0.107px;">352,80</div>
<div class="t" style="left:778.00px;top:264.02px;line-height:20px;font-size:11.5px;color:#000;letter-spacing:0.000px;">Objednané u dodávateľa</div>
<svg style="left:757px;top:265px" width="16" height="17" viewBox="0 0 16 17"><circle cx="8" cy="7.5" r="6.6" fill="#f3f5f8" stroke="#9aa0a8" stroke-width="1.2"/>
<circle cx="8" cy="7.5" r="5" fill="#fbfcfd"/>
<path d="M7.5 3 V8.5 H11" stroke="#222" stroke-width="1.1" fill="none"/>
<path d="M8.5 12 H12.2 V10 L15.6 12.6 L12.2 15.2 V13.2 H8.5Z" fill="#3c8ce8" stroke="#1f63c0" stroke-width="0.6"/></svg>
<div class="a" style="left:179px;top:284px;width:10px;height:21px;background:linear-gradient(90deg,#fbfbfb,#e6e6e6 60%,#d2d2d2)"></div>
<div class="a" style="left:190px;top:284px;width:732px;height:21px;background:#eef6fe"></div>
<div class="a" style="left:179px;top:305px;width:743px;height:1px;background:#a9a9a9"></div>
<div class="a" style="left:179px;top:305px;width:11px;height:1px;background:#5e5e5e"></div>
<div class="a" style="left:189px;top:284px;width:1px;height:21px;background:#5e5e5e"></div>
<div class="a" style="left:204px;top:284px;width:1px;height:21px;background:#a9a9a9"></div>
<div class="a" style="left:221px;top:284px;width:1px;height:21px;background:#a9a9a9"></div>
<div class="a" style="left:302px;top:284px;width:1px;height:21px;background:#a9a9a9"></div>
<div class="a" style="left:392px;top:284px;width:1px;height:21px;background:#a9a9a9"></div>
<div class="a" style="left:492px;top:284px;width:1px;height:21px;background:#a9a9a9"></div>
<div class="a" style="left:596px;top:284px;width:1px;height:21px;background:#a9a9a9"></div>
<div class="a" style="left:676px;top:284px;width:1px;height:21px;background:#a9a9a9"></div>
<div class="a" style="left:756px;top:284px;width:1px;height:21px;background:#a9a9a9"></div>
<svg style="left:919px;top:284px" width="3" height="3"><path d="M0.2 0 H3 V2.8Z" fill="#5a96ea"/></svg>
<svg style="left:205px;top:284px" width="7" height="7"><path d="M0 0 H6.5 L0 6.5Z" fill="#67a5f3"/></svg>
<div class="a" style="left:222px;top:284px;width:80px;height:21px;background:#d4d4d4"></div>
<div class="a" style="left:223px;top:285px;width:78px;height:19px;background:#d6b48e;border:1px solid #5a5a5a;border-radius:4px"></div>
<div class="t" style="left:231.50px;top:285.19px;line-height:20px;font-size:11px;font-weight:bold;-webkit-text-stroke:0;color:#000;letter-spacing:-0.227px;">PP-200002</div>
<div class="t" style="left:306.00px;top:285.19px;line-height:20px;font-size:11px;font-weight:bold;-webkit-text-stroke:0;color:#9a12d4;letter-spacing:-0.179px;">23.07.20 10:18</div>
<div class="t" style="left:396.00px;top:285.19px;line-height:20px;font-size:11px;font-weight:bold;-webkit-text-stroke:0;color:#9a12d4;letter-spacing:0.000px;">Ponuka</div>
<div class="t" style="left:496.00px;top:285.19px;line-height:20px;font-size:11px;font-weight:bold;-webkit-text-stroke:0;color:#9a12d4;letter-spacing:-0.214px;">Borent s.r.o.</div>
<div class="t" style="left:630.00px;top:285.19px;line-height:20px;font-size:11px;font-weight:bold;-webkit-text-stroke:0;color:#9a12d4;letter-spacing:-0.102px;">4 666,67</div>
<div class="t" style="left:710.00px;top:285.19px;line-height:20px;font-size:11px;font-weight:bold;-webkit-text-stroke:0;color:#9a12d4;letter-spacing:-0.102px;">5 600,00</div>
<div class="t" style="left:778.00px;top:286.19px;line-height:20px;font-size:11px;font-weight:bold;-webkit-text-stroke:0;color:#9a12d4;letter-spacing:0.000px;">Akceptovaná ponuka</div>
<svg style="left:757px;top:290px" width="16" height="16" viewBox="0 0 16 16"><path d="M0.8 8 Q0.8 6.5 2.5 6.5 H5.2 L7.6 2.4 Q8.4 0.6 9.8 1.2 Q10.8 1.8 10.2 3.8 L9.4 6.2 H13.6 Q15.2 6.2 15.2 7.6 Q15.2 8.6 14.2 8.9 Q15 9.4 14.6 10.4 Q14.2 11.2 13.6 11.3 Q14 12.2 13.2 12.9 Q12.7 13.3 12 13.3 Q12.2 14.6 10.8 14.9 H4.5 Q0.8 14.9 0.8 11.5Z" fill="#eec58e" stroke="#c89050" stroke-width="0.9"/>
<path d="M4.5 7.5 V14" stroke="#c89050" stroke-width="0.8"/></svg>
<div class="a" style="left:179px;top:306px;width:10px;height:21px;background:linear-gradient(90deg,#fbfbfb,#e6e6e6 60%,#d2d2d2)"></div>
<div class="a" style="left:190px;top:306px;width:732px;height:21px;background:#fff"></div>
<div class="a" style="left:179px;top:327px;width:743px;height:1px;background:#a9a9a9"></div>
<div class="a" style="left:179px;top:327px;width:11px;height:1px;background:#5e5e5e"></div>
<div class="a" style="left:189px;top:306px;width:1px;height:21px;background:#5e5e5e"></div>
<div class="a" style="left:204px;top:306px;width:1px;height:21px;background:#a9a9a9"></div>
<div class="a" style="left:221px;top:306px;width:1px;height:21px;background:#a9a9a9"></div>
<div class="a" style="left:302px;top:306px;width:1px;height:21px;background:#a9a9a9"></div>
<div class="a" style="left:392px;top:306px;width:1px;height:21px;background:#a9a9a9"></div>
<div class="a" style="left:492px;top:306px;width:1px;height:21px;background:#a9a9a9"></div>
<div class="a" style="left:596px;top:306px;width:1px;height:21px;background:#a9a9a9"></div>
<div class="a" style="left:676px;top:306px;width:1px;height:21px;background:#a9a9a9"></div>
<div class="a" style="left:756px;top:306px;width:1px;height:21px;background:#a9a9a9"></div>
<svg style="left:919px;top:306px" width="3" height="3"><path d="M0.2 0 H3 V2.8Z" fill="#5a96ea"/></svg>
<svg style="left:205px;top:306px" width="7" height="7"><path d="M0 0 H6.5 L0 6.5Z" fill="#67a5f3"/></svg>
<div class="a" style="left:222px;top:306px;width:80px;height:21px;background:#d4d4d4"></div>
<div class="a" style="left:223px;top:307px;width:78px;height:19px;background:#ffa447;border:1px solid #5a5a5a;border-radius:4px"></div>
<div class="t" style="left:231.50px;top:307.19px;line-height:20px;font-size:11px;font-weight:bold;-webkit-text-stroke:0;color:#000;letter-spacing:-0.251px;">OP-200007</div>
<div class="t" style="left:306.00px;top:307.19px;line-height:20px;font-size:11px;font-weight:bold;-webkit-text-stroke:0;color:#000;letter-spacing:-0.179px;">24.07.20 08:47</div>
<div class="t" style="left:396.00px;top:307.19px;line-height:20px;font-size:11px;font-weight:bold;-webkit-text-stroke:0;color:#000;letter-spacing:0.000px;">Objednávka</div>
<div class="t" style="left:496.00px;top:307.19px;line-height:20px;font-size:11px;font-weight:bold;-webkit-text-stroke:0;color:#000;letter-spacing:-0.003px;">Ján Novák</div>
<div class="t" style="left:639.00px;top:307.19px;line-height:20px;font-size:11px;font-weight:bold;-webkit-text-stroke:0;color:#000;letter-spacing:-0.107px;">520,00</div>
<div class="t" style="left:719.00px;top:307.19px;line-height:20px;font-size:11px;font-weight:bold;-webkit-text-stroke:0;color:#000;letter-spacing:-0.107px;">624,00</div>
<div class="t" style="left:778.00px;top:308.19px;line-height:20px;font-size:11px;font-weight:bold;-webkit-text-stroke:0;color:#000;letter-spacing:0.000px;">Očakávaná platba</div>
<svg style="left:757px;top:312px" width="16" height="17" viewBox="0 0 16 17"><g stroke="#a8621a" stroke-width="0.8">
<ellipse cx="10" cy="2.5" rx="3.6" ry="1.6" fill="#ffd27a"/>
<path d="M6.4 2.5 V11 H13.6 V2.5" fill="#eaa84a"/>
<path d="M6.4 5 Q10 6.6 13.6 5 M6.4 7.5 Q10 9.1 13.6 7.5" fill="none" stroke="#ffe0a0"/>
<ellipse cx="4.2" cy="7" rx="3.6" ry="1.6" fill="#ffd27a"/>
<path d="M0.6 7 V14.2 Q4.2 16 7.8 14.2 V7" fill="#eaa84a"/>
<path d="M0.6 9.6 Q4.2 11.2 7.8 9.6 M0.6 12 Q4.2 13.6 7.8 12" fill="none" stroke="#ffe0a0"/>
<ellipse cx="12" cy="10.5" rx="3.6" ry="1.6" fill="#ffd27a"/>
<path d="M8.4 10.5 V14.2 Q12 16 15.6 14.2 V10.5" fill="#eaa84a"/>
</g></svg>
<div class="a" style="left:179px;top:328px;width:10px;height:21px;background:linear-gradient(90deg,#fbfbfb,#e6e6e6 60%,#d2d2d2)"></div>
<div class="a" style="left:190px;top:328px;width:732px;height:21px;background:#eef6fe"></div>
<div class="a" style="left:179px;top:349px;width:743px;height:1px;background:#a9a9a9"></div>
<div class="a" style="left:179px;top:349px;width:11px;height:1px;background:#5e5e5e"></div>
<div class="a" style="left:189px;top:328px;width:1px;height:21px;background:#5e5e5e"></div>
<div class="a" style="left:204px;top:328px;width:1px;height:21px;background:#a9a9a9"></div>
<div class="a" style="left:221px;top:328px;width:1px;height:21px;background:#a9a9a9"></div>
<div class="a" style="left:302px;top:328px;width:1px;height:21px;background:#a9a9a9"></div>
<div class="a" style="left:392px;top:328px;width:1px;height:21px;background:#a9a9a9"></div>
<div class="a" style="left:492px;top:328px;width:1px;height:21px;background:#a9a9a9"></div>
<div class="a" style="left:596px;top:328px;width:1px;height:21px;background:#a9a9a9"></div>
<div class="a" style="left:676px;top:328px;width:1px;height:21px;background:#a9a9a9"></div>
<div class="a" style="left:756px;top:328px;width:1px;height:21px;background:#a9a9a9"></div>
<svg style="left:919px;top:328px" width="3" height="3"><path d="M0.2 0 H3 V2.8Z" fill="#5a96ea"/></svg>
<svg style="left:205px;top:328px" width="7" height="7"><path d="M0 0 H6.5 L0 6.5Z" fill="#67a5f3"/></svg>
<div class="a" style="left:222px;top:328px;width:80px;height:21px;background:#d4d4d4"></div>
<div class="a" style="left:223px;top:329px;width:78px;height:19px;background:#f4f4f4;border:1px solid #5a5a5a;border-radius:4px"></div>
<div class="t" style="left:231.50px;top:329.19px;line-height:20px;font-size:11px;font-weight:bold;-webkit-text-stroke:0;color:#000;letter-spacing:-0.227px;">PP-200003</div>
<div class="t" style="left:306.00px;top:329.19px;line-height:20px;font-size:11px;font-weight:bold;-webkit-text-stroke:0;color:#000;letter-spacing:-0.179px;">24.07.20 08:50</div>
<div class="t" style="left:396.00px;top:329.19px;line-height:20px;font-size:11px;font-weight:bold;-webkit-text-stroke:0;color:#000;letter-spacing:0.000px;">Ponuka</div>
<div class="t" style="left:496.00px;top:329.19px;line-height:20px;font-size:11px;font-weight:bold;-webkit-text-stroke:0;color:#000;letter-spacing:-0.317px;">Seven s.r.o</div>
<div class="t" style="left:639.00px;top:329.19px;line-height:20px;font-size:11px;font-weight:bold;-webkit-text-stroke:0;color:#000;letter-spacing:-0.107px;">569,33</div>
<div class="t" style="left:719.00px;top:329.19px;line-height:20px;font-size:11px;font-weight:bold;-webkit-text-stroke:0;color:#000;letter-spacing:-0.107px;">683,20</div>
<div class="t" style="left:778.00px;top:330.19px;line-height:20px;font-size:11px;font-weight:bold;-webkit-text-stroke:0;color:#000;letter-spacing:0.000px;">Nová ponuka</div>
<svg style="left:758px;top:333px" width="17" height="16" viewBox="0 0 17 16"><rect x="4.5" y="0.5" width="8" height="11" fill="#b8b8b8" stroke="#6e6e6e"/>
<path d="M5.5 3 H11.5 M5.5 5 H11.5" stroke="#ececec"/>
<rect x="1" y="5.5" width="6" height="8" fill="#1e5cc8" stroke="#0c2e80" stroke-width="0.8"/>
<path d="M3 6.5 V13 M5 6.5 V13" stroke="#6ea0f0" stroke-width="0.8"/>
<path d="M7 6.8 H10.5 Q12 6.8 12 8 H14.6 Q15.8 8.4 15.4 9.6 L13.8 12.6 Q13 13.6 11.6 13.6 H7Z" fill="#e6a45a" stroke="#a5621a" stroke-width="0.8"/></svg>
<div class="a" style="left:179px;top:350px;width:10px;height:21px;background:linear-gradient(90deg,#fbfbfb,#e6e6e6 60%,#d2d2d2)"></div>
<div class="a" style="left:190px;top:350px;width:732px;height:21px;background:#86cbf8"></div>
<div class="a" style="left:179px;top:371px;width:743px;height:1px;background:#a9a9a9"></div>
<div class="a" style="left:179px;top:371px;width:11px;height:1px;background:#5e5e5e"></div>
<div class="a" style="left:189px;top:350px;width:1px;height:21px;background:#5e5e5e"></div>
<div class="a" style="left:204px;top:350px;width:1px;height:21px;background:#a9a9a9"></div>
<div class="a" style="left:221px;top:350px;width:1px;height:21px;background:#a9a9a9"></div>
<div class="a" style="left:302px;top:350px;width:1px;height:21px;background:#a9a9a9"></div>
<div class="a" style="left:392px;top:350px;width:1px;height:21px;background:#a9a9a9"></div>
<div class="a" style="left:492px;top:350px;width:1px;height:21px;background:#a9a9a9"></div>
<div class="a" style="left:596px;top:350px;width:1px;height:21px;background:#a9a9a9"></div>
<div class="a" style="left:676px;top:350px;width:1px;height:21px;background:#a9a9a9"></div>
<div class="a" style="left:756px;top:350px;width:1px;height:21px;background:#a9a9a9"></div>
<svg style="left:919px;top:350px" width="3" height="3"><path d="M0.2 0 H3 V2.8Z" fill="#5a96ea"/></svg>
<svg style="left:205px;top:350px" width="7" height="7"><path d="M0 0 H6.5 L0 6.5Z" fill="#67a5f3"/></svg>
<div class="a" style="left:222px;top:350px;width:80px;height:21px;background:#86cbf8"></div>
<div class="a" style="left:223px;top:351px;width:78px;height:19px;background:#9ccde0;border:1px solid #5a5a5a;border-radius:4px"></div>
<div class="t" style="left:231.50px;top:351.19px;line-height:20px;font-size:11px;font-weight:bold;-webkit-text-stroke:0;color:#000;letter-spacing:-0.251px;">OP-200008</div>
<div class="t" style="left:306.00px;top:351.19px;line-height:20px;font-size:11px;font-weight:bold;-webkit-text-stroke:0;color:#9a12d4;letter-spacing:-0.179px;">24.07.20 10:17</div>
<div class="t" style="left:396.00px;top:351.19px;line-height:20px;font-size:11px;font-weight:bold;-webkit-text-stroke:0;color:#9a12d4;letter-spacing:0.000px;">Objednávka</div>
<div class="t" style="left:496.00px;top:351.19px;line-height:20px;font-size:11px;font-weight:bold;-webkit-text-stroke:0;color:#9a12d4;letter-spacing:-0.210px;">Floren a.s.</div>
<div class="t" style="left:630.00px;top:351.19px;line-height:20px;font-size:11px;font-weight:bold;-webkit-text-stroke:0;color:#9a12d4;letter-spacing:-0.102px;">4 666,67</div>
<div class="t" style="left:710.00px;top:351.19px;line-height:20px;font-size:11px;font-weight:bold;-webkit-text-stroke:0;color:#9a12d4;letter-spacing:-0.102px;">5 600,00</div>
<div class="t" style="left:778.00px;top:352.19px;line-height:20px;font-size:11px;font-weight:bold;-webkit-text-stroke:0;color:#9a12d4;letter-spacing:0.000px;">Nová objednávka</div>
<svg style="left:758px;top:356px" width="17" height="16" viewBox="0 0 17 16"><rect x="0.5" y="3" width="9" height="11" fill="#fafafa" stroke="#a0a0a0" stroke-width="0.8"/>
<path d="M3.5 0.5 H9.5 L12.5 3.5 V10 H3.5Z" fill="#fdfdfd" stroke="#9a9a9a" stroke-width="0.8"/>
<path d="M9.5 0.5 V3.5 H12.5" fill="none" stroke="#9a9a9a" stroke-width="0.8"/>
<rect x="5.5" y="8" width="10" height="7" fill="#fff" stroke="#4a6c9a"/>
<path d="M6.5 10 H10 M6.5 12 H10" stroke="#8ab0e0"/>
<rect x="12.5" y="9" width="2" height="2" fill="#e21a1a"/></svg>
<div class="a" style="left:190px;top:350px;width:14px;height:21px;border:1px solid #0a0a80;background:#86cbf8"></div>
<svg style="left:208px;top:104px" width="9" height="17" viewBox="0 0 9 17"><path d="M1.5 5.5 V12 Q1.5 15.5 4.5 15.5 Q7.5 15.5 7.5 12 V4.5 L4.5 1 L2.8 3" stroke="#5f6f88" stroke-width="1" fill="none"/><path d="M5.5 4.5 V11.5 Q5.5 13 4.5 13 Q3.5 13 3.5 11.5 V5" stroke="#5f6f88" stroke-width="1" fill="none"/></svg>
<div class="t" style="left:227.00px;top:102.02px;line-height:20px;font-size:11.5px;color:#000;letter-spacing:0.000px;"><span class="u">Č</span>íslo</div>
<div class="t" style="left:308.00px;top:96.02px;line-height:20px;font-size:11.5px;color:#000;letter-spacing:0.000px;">D<span class="u">á</span>tum</div>
<div class="t" style="left:308.00px;top:110.02px;line-height:20px;font-size:11.5px;color:#000;letter-spacing:0.000px;">evidencie</div>
<div class="t" style="left:397.00px;top:102.02px;line-height:20px;font-size:11.5px;color:#000;letter-spacing:0.000px;">Typ dokladu</div>
<div class="t" style="left:498.00px;top:102.02px;line-height:20px;font-size:11.5px;color:#000;letter-spacing:0.000px;">Obchodný <span class="u">p</span>artner</div>
<div class="t" style="left:605.00px;top:96.02px;line-height:20px;font-size:11.5px;color:#000;letter-spacing:-0.333px;"><span class="u">S</span>uma celkom</div>
<div class="t" style="left:629.00px;top:110.02px;line-height:20px;font-size:11.5px;color:#000;letter-spacing:-0.574px;">bez DPH</div>
<div class="t" style="left:685.00px;top:96.02px;line-height:20px;font-size:11.5px;color:#000;letter-spacing:-0.333px;"><span class="u">S</span>uma celkom</div>
<div class="t" style="left:721.00px;top:110.02px;line-height:20px;font-size:11.5px;color:#000;letter-spacing:-0.645px;">s DPH</div>
<div class="t" style="left:762.00px;top:102.02px;line-height:20px;font-size:11.5px;color:#000;letter-spacing:0.000px;">Stav</div>
<div class="t" style="left:288.00px;top:98.23px;line-height:20px;font-size:8px;color:#000;letter-spacing:0.000px;">2</div>
<div class="a" style="left:295px;top:107px;width:4px;height:4px;background:#c8c8c8;border:1px solid #000"></div>
<div class="a" style="left:293px;top:112px;width:6px;height:3px;background:#c8c8c8;border:1px solid #000"></div>
<div class="a" style="left:291px;top:116px;width:8px;height:4px;background:#c8c8c8;border:1px solid #000"></div>
<div class="t" style="left:378.00px;top:98.23px;line-height:20px;font-size:8px;color:#000;letter-spacing:0.000px;">1</div>
<div class="a" style="left:385px;top:107px;width:4px;height:4px;background:#c8c8c8;border:1px solid #000"></div>
<div class="a" style="left:383px;top:112px;width:6px;height:3px;background:#c8c8c8;border:1px solid #000"></div>
<div class="a" style="left:381px;top:116px;width:8px;height:4px;background:#c8c8c8;border:1px solid #000"></div>
<div class="a" style="left:178px;top:434px;width:744px;height:17px;background:#f1f1f1"></div>
<div class="a" style="left:178px;top:434px;width:744px;height:1px;background:#f6f6f6"></div>
<div class="a" style="left:178px;top:450px;width:744px;height:1px;background:#6e6e6e"></div>
<div class="a" style="left:178px;top:434px;width:17px;height:17px;background:#f0f0f0;border-top:1px solid #fff;box-shadow:inset -1px -1px 0 #6a6a6a, inset -2px -2px 0 #b0b0b0"></div>
<svg style="left:183px;top:438px" width="5" height="9"><path d="M0 4.5 L4 0.5 V8.5Z" fill="#000"/></svg>
<div class="a" style="left:195px;top:434px;width:177px;height:17px;background:#efefef;border-top:1px solid #fff;border-left:1px solid #fff;box-shadow:inset -1px -1px 0 #6a6a6a, inset -2px -2px 0 #b0b0b0"></div>
<div class="a" style="left:372px;top:434px;width:533px;height:16px;background:#f2f2f2"></div>
<div class="a" style="left:372px;top:450px;width:533px;height:1px;background:#a8a8a8"></div>
<div class="a" style="left:905px;top:434px;width:16px;height:17px;background:#f0f0f0;border-top:1px solid #fff;border-left:1px solid #fff;box-shadow:inset -1px -1px 0 #6a6a6a, inset -2px -2px 0 #a8a8a8"></div>
<svg style="left:912px;top:439px" width="5" height="8"><path d="M4.5 4 L0 0 V8Z" fill="#000"/></svg>
<div class="a" style="left:178px;top:451px;width:744px;height:54px;background:#efefef"></div>
<div class="a" style="left:178px;top:451px;width:12px;height:54px;background:linear-gradient(90deg,#f8f8f8,#e8e8e8 50%,#d4d4d4)"></div>
<div class="a" style="left:190px;top:451px;width:1px;height:54px;background:#6e6e6e"></div>
<div class="a" style="left:222px;top:451px;width:81px;height:54px;background:#fff;border-left:1px solid #d8d8d8"></div>
<div class="a" style="left:303px;top:451px;width:91px;height:54px;background:#fff;border-left:1px solid #d8d8d8;border-right:1px solid #d0d0d0"></div>
<div class="a" style="left:597px;top:451px;width:80px;height:54px;background:#fff;border-left:1px solid #d0d0d0"></div>
<div class="a" style="left:677px;top:451px;width:81px;height:54px;background:#fff;border-left:1px solid #d8d8d8;border-right:1px solid #d0d0d0"></div>
<div class="t" style="left:227.00px;top:451.19px;line-height:20px;font-size:11px;font-weight:bold;-webkit-text-stroke:0;color:#000;letter-spacing:-0.251px;">OP-200001</div>
<div class="t" style="left:227.00px;top:464.19px;line-height:20px;font-size:11px;font-weight:bold;-webkit-text-stroke:0;color:#000;letter-spacing:-0.227px;">PP-200003</div>
<div class="t" style="left:227.00px;top:483.69px;line-height:20px;font-size:11px;color:#000;letter-spacing:0.000px;">(min/max)</div>
<div class="t" style="left:624.00px;top:451.19px;line-height:20px;font-size:11px;font-weight:bold;-webkit-text-stroke:0;color:#000;letter-spacing:-0.104px;">20 634,18</div>
<div class="t" style="left:704.00px;top:451.19px;line-height:20px;font-size:11px;font-weight:bold;-webkit-text-stroke:0;color:#000;letter-spacing:-0.104px;">24 761,00</div>
<div class="t" style="left:636.38px;top:484.19px;line-height:20px;font-size:11px;color:#000;letter-spacing:0.000px;">(súčet)</div>
<div class="t" style="left:716.38px;top:484.19px;line-height:20px;font-size:11px;color:#000;letter-spacing:0.000px;">(súčet)</div>
<div class="a" style="left:8px;top:505px;width:914px;height:1px;background:#a8a8a8"></div>
<div class="a" style="left:8px;top:506px;width:914px;height:42px;background:linear-gradient(#f3f3f3,#dedede);overflow:hidden"><svg style="left:0;top:0" width="914" height="42"><path d="M0 29 C20 24 60 20.5 100 20 L290 20 C340 20.5 380 22.5 420 22.5 C560 22.5 650 21 708 18 C760 16.5 800 15.5 830 14 C870 12 895 10 914 8 L914 42 L0 42Z" fill="#b7cfe3"/><path d="M0 29 C20 24 60 20.5 100 20 L290 20 C340 20.5 380 22.5 420 22.5 C560 22.5 650 21 708 18 C760 16.5 800 15.5 830 14 C870 12 895 10 914 8" stroke="#a4c2e8" stroke-width="1.2" fill="none"/></svg></div>
<div class="a" style="left:20px;top:515px;width:90px;height:25px;border:1px solid #3a3aa6;border-radius:3px;background:linear-gradient(#f6f6f6,#ededed 45%,#dedede 55%,#d6d6d6);box-shadow:inset 0 0 0 1px #fff"></div>
<div class="t" style="left:38.99px;top:517.84px;line-height:20px;font-size:12px;color:#000;letter-spacing:0.000px;">V<span class="u">l</span>astnosti</div>
<div class="a" style="left:116px;top:515px;width:90px;height:25px;border:1px solid #3a3aa6;border-radius:3px;background:linear-gradient(#f6f6f6,#ededed 45%,#dedede 55%,#d6d6d6);box-shadow:inset 0 0 0 1px #fff"></div>
<div class="t" style="left:149.67px;top:517.84px;line-height:20px;font-size:12px;color:#000;letter-spacing:0.000px;"><span class="u">T</span>lač</div>
<div class="a" style="left:212px;top:515px;width:90px;height:25px;border:1px solid #3a3aa6;border-radius:3px;background:linear-gradient(#f6f6f6,#ededed 45%,#dedede 55%,#d6d6d6);box-shadow:inset 0 0 0 1px #fff"></div>
<div class="t" style="left:232.99px;top:517.84px;line-height:20px;font-size:12px;color:#000;letter-spacing:0.000px;"><span class="u">M</span>ožnosti</div>
<div class="a" style="left:527px;top:515px;width:90px;height:25px;border:1px solid #3a3aa6;border-radius:3px;background:linear-gradient(#f6f6f6,#ededed 45%,#dedede 55%,#d6d6d6);box-shadow:inset 0 0 0 1px #fff"></div>
<div class="t" style="left:558.33px;top:517.84px;line-height:20px;font-size:12px;color:#000;letter-spacing:0.000px;"><span class="u">N</span>ový</div>
<div class="a" style="left:623px;top:515px;width:90px;height:25px;border:1px solid #3a3aa6;border-radius:3px;background:linear-gradient(#f6f6f6,#ededed 45%,#dedede 55%,#d6d6d6);box-shadow:inset 0 0 0 1px #fff"></div>
<div class="t" style="left:648.32px;top:517.84px;line-height:20px;font-size:12px;color:#000;letter-spacing:0.000px;"><span class="u">O</span>prava</div>
<div class="a" style="left:719px;top:515px;width:90px;height:25px;border:1px solid #3a3aa6;border-radius:3px;background:linear-gradient(#f6f6f6,#ededed 45%,#dedede 55%,#d6d6d6);box-shadow:inset 0 0 0 1px #fff"></div>
<div class="t" style="left:740.30px;top:517.84px;line-height:20px;font-size:12px;color:#000;letter-spacing:0.000px;"><span class="u">V</span>ymazať</div>
<div class="a" style="left:820px;top:515px;width:90px;height:25px;border:1px solid #3a3aa6;border-radius:3px;background:linear-gradient(#f6f6f6,#ededed 45%,#dedede 55%,#d6d6d6);box-shadow:inset 0 0 0 1px #fff"></div>
<div class="t" style="left:844.41px;top:517.84px;line-height:20px;font-size:12px;color:#000;letter-spacing:0.000px;">Zatvoriť</div>
<svg style="left:908px;top:534px" width="14" height="14"><path d="M14 0.5 L0.5 14 M14 4 L4 14 M14 7.5 L7.5 14 M14 11 L11 14" stroke="#2c3ca4" stroke-width="1.4"/></svg>
</body></html>
